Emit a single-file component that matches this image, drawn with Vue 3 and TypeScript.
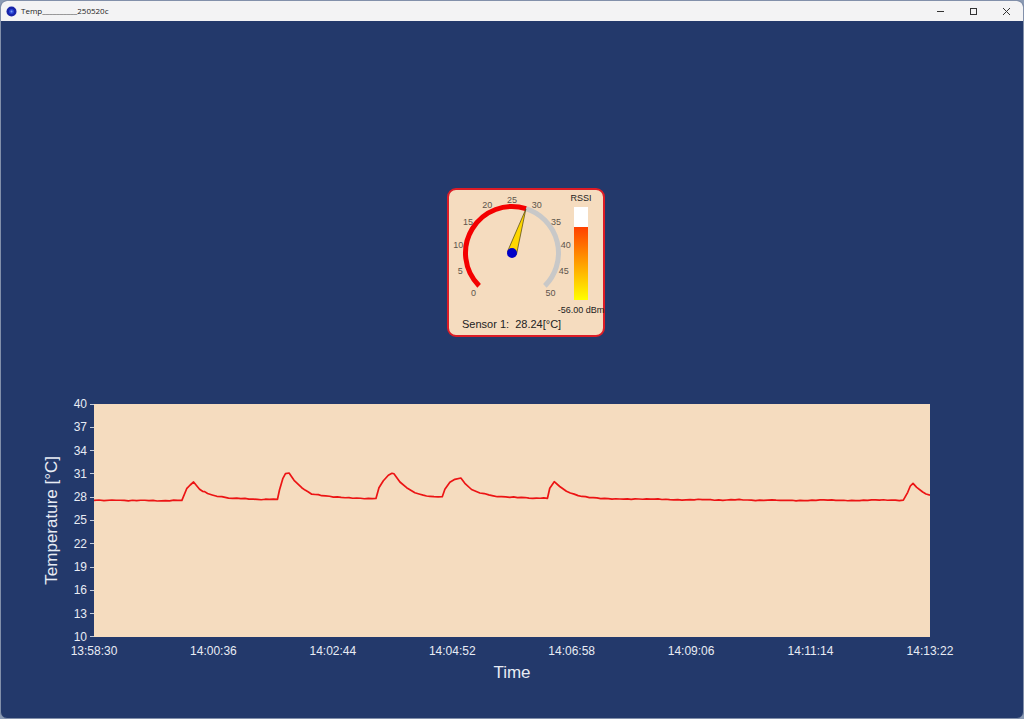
<script setup lang="ts">
type Point = [number, number]

const sensor = { name: 'Sensor 1', value: 28.24, rssi: -56 }

const gauge = { cx: 63, cy: 63, r: 46.5, max: 50, labelR: 54.5 }

function polar(value: number, radius: number): Point {
  const a = ((-135 + (value / gauge.max) * 270) * Math.PI) / 180
  return [gauge.cx + radius * Math.sin(a), gauge.cy - radius * Math.cos(a)]
}

function arc(from: number, to: number): string {
  const [x1, y1] = polar(from, gauge.r)
  const [x2, y2] = polar(to, gauge.r)
  const large = ((to - from) / gauge.max) * 270 > 180 ? 1 : 0
  return `M${x1} ${y1}A${gauge.r} ${gauge.r} 0 ${large} 1 ${x2} ${y2}`
}

const gaugeLabels = Array.from({ length: 11 }, (_, i) => {
  const [x, y] = polar(i * 5, gauge.labelR)
  return { text: String(i * 5), x, y: y + 4 }
})
const tip = polar(sensor.value, 46)
const needle = `58.5,61.5 ${tip[0]},${tip[1]} 67.5,64.5`

const rssiFill = 79

const yTicks = [40, 37, 34, 31, 28, 25, 22, 19, 16, 13, 10]
const xTicks = ['13:58:30', '14:00:36', '14:02:44', '14:04:52', '14:06:58', '14:09:06', '14:11:14', '14:13:22']

// Trace vertices in plot units (837 x 233, origin at the top left)
const trace: Point[] = [
  [0, 96.3], [5, 96], [10, 96.6], [18, 96], [55, 96.7], [88, 96.4], [93, 84.3], [96.3, 81], [99.7, 78],
  [105.7, 85.3], [108.7, 87.3], [110.8, 87.6], [113.7, 89.5], [123, 92.3], [128, 92.7], [134.7, 94.2],
  [159.3, 95.2], [183.7, 95.3], [185.7, 86], [189, 74.7], [191.7, 69.7], [195.3, 69], [200.3, 76.3], [208, 83.7],
  [218, 90.2], [228, 91.7], [239.7, 93.2], [263, 94], [282.3, 94.5], [285.3, 83.7], [289.7, 76.7], [294.7, 71.2],
  [298.3, 69.3], [300.3, 69.8], [306.3, 78], [313, 83.7], [321.3, 88.7], [326.3, 90.2], [336.3, 92.3], [348.7, 92.7],
  [351.3, 85.3], [356.3, 78.3], [361.3, 75.3], [367.3, 74], [371.3, 79.3], [378, 85.5], [386.3, 89], [399.7, 91.8],
  [416.3, 93.3], [439.3, 94.3], [454, 94.3], [456.3, 84.3], [460.8, 77.7], [466.3, 82.5], [473, 87.3], [484.7, 91.6],
  [499.7, 93.6], [526.3, 95], [576.3, 95.6], [650, 96], [687, 96.3], [810.3, 96.2], [814.7, 88.3], [817.3, 82],
  [820, 79.3], [823.7, 83.3], [829.7, 88], [833, 90], [837, 91.2],
]

// Longer stretches get intermediate samples with a small reading ripple
const samples: Point[] = trace.flatMap((p, i) => {
  const next = trace[i + 1]
  if (!next || next[0] - p[0] < 9) return [p]
  const n = Math.round((next[0] - p[0]) / 4)
  return Array.from({ length: n }, (_, k): Point => {
    const t = k / n
    const x = p[0] + (next[0] - p[0]) * t
    const ripple = k === 0 ? 0 : 0.3 * Math.sin(x * 1.7) + 0.25 * Math.sin(x * 0.61)
    return [x, p[1] + (next[1] - p[1]) * t + ripple]
  })
})
const polyline = samples.map((p) => p.join(',')).join(' ')
</script>

<template>
  <div class="window">
    <header class="titlebar">
      <svg class="app-icon" viewBox="0 0 11 11" aria-hidden="true">
        <circle cx="5.5" cy="5.5" r="5" fill="#1723a8" />
        <circle cx="5.5" cy="5.5" r="2.5" fill="#2a48d8" />
        <circle cx="5.5" cy="5.5" r="1" fill="#7fa0f4" />
      </svg>
      <h1 class="title">Temp__________250520c</h1>
      <button type="button" aria-label="Minimize">
        <svg viewBox="0 0 9 9"><path d="M1 4.5h7" /></svg>
      </button>
      <button type="button" aria-label="Maximize">
        <svg viewBox="0 0 9 9"><rect x="1.5" y="1.5" width="6" height="6" /></svg>
      </button>
      <button type="button" aria-label="Close">
        <svg viewBox="0 0 9 9"><path d="M1 1l7 7M8 1l-7 7" /></svg>
      </button>
    </header>

    <main class="content">
      <section class="card">
        <div class="meters">
          <svg class="gauge" viewBox="0 0 124 112" role="img" aria-label="Temperature gauge">
            <path :d="arc(sensor.value, 50)" class="arc rest" />
            <path :d="arc(0, sensor.value)" class="arc active" />
            <text v-for="l in gaugeLabels" :key="l.text" :x="l.x" :y="l.y">{{ l.text }}</text>
            <polygon :points="needle" class="needle" />
            <circle :cx="gauge.cx" :cy="gauge.cy" r="5" fill="#0000c8" />
          </svg>
          <div class="rssi">
            <span>RSSI</span>
            <div class="bar"><div class="fill" :style="{ height: rssiFill + '%' }"></div></div>
            <span>{{ sensor.rssi.toFixed(2) }} dBm</span>
          </div>
        </div>
        <p class="reading">{{ sensor.name }}:&nbsp; {{ sensor.value.toFixed(2) }}[°C]</p>
      </section>

      <section class="chart">
        <div class="y-title"><span>Temperature [°C]</span></div>
        <div class="y-axis">
          <span v-for="t in yTicks" :key="t">{{ t }}</span>
        </div>
        <svg class="plot" viewBox="0 0 837 233" preserveAspectRatio="none" role="img" aria-label="Temperature over time">
          <polyline :points="polyline" />
        </svg>
        <div class="x-axis">
          <span v-for="t in xTicks" :key="t">{{ t }}</span>
        </div>
        <div class="x-title">Time</div>
      </section>
    </main>
  </div>
</template>

<style>
body {
  margin: 0;
  background: #8b9bb4;
}
</style>

<style scoped>
.window {
  box-sizing: border-box;
  display: flex;
  flex-direction: column;
  min-height: 100vh;
  border: 1px solid #8290aa;
  border-radius: 7px;
  overflow: hidden;
  background: #23396b;
  font-family: "Liberation Sans", Arial, sans-serif;
}

.titlebar {
  display: flex;
  align-items: center;
  height: 20px;
  padding-left: 5px;
  background: #f3f3f4;
  color: #222;
}

.app-icon {
  width: 11px;
  height: 11px;
  margin-right: 4px;
}

.title {
  flex: 1;
  margin: 0;
  font: 400 8px/12px "Open Sans", "Noto Sans", sans-serif;
}

.titlebar button {
  display: grid;
  place-items: center;
  width: 33px;
  height: 20px;
  padding: 0;
  border: 0;
  background: none;
}

.titlebar button svg {
  width: 9px;
  height: 9px;
  fill: none;
  stroke: #333;
  stroke-width: 1;
}

.content {
  flex: 1;
  display: flex;
  flex-direction: column;
  gap: 67px;
  padding: 167px 0 35px;
}

.card {
  box-sizing: border-box;
  align-self: center;
  width: 158px;
  margin-left: 28px;
  border: 2px solid #dc1c26;
  border-radius: 9px;
  background: #f5dcbf;
}

.meters {
  display: flex;
  height: 127px;
}

.gauge {
  flex: none;
  width: 124px;
  height: 112px;
}

.gauge text {
  font-size: 9px;
  text-anchor: middle;
  fill: #5c544c;
}

.arc {
  fill: none;
  stroke-width: 5;
}

.rest {
  stroke: #c8c8c8;
}

.active {
  stroke: #f40000;
}

.needle {
  fill: #ffd700;
  stroke: #4a4010;
  stroke-width: 0.7;
}

.rssi {
  display: flex;
  flex-direction: column;
  align-items: center;
  width: 14px;
  margin-left: 1px;
  padding-top: 4px;
  font-size: 9px;
  line-height: 9px;
  white-space: nowrap;
  color: #222;
}

.bar {
  display: flex;
  align-items: flex-end;
  width: 14px;
  height: 93px;
  margin: 4px 0 6px;
  background: #fff;
}

.fill {
  width: 100%;
  background: linear-gradient(#ff4000, #ffff00);
}

.reading {
  margin: 0;
  padding: 0 0 3px 13px;
  font-size: 11px;
  line-height: 15px;
  color: #222;
}

.chart {
  flex: 1;
  display: grid;
  grid-template-columns: 20px 32px 1fr;
  grid-template-rows: minmax(160px, 1fr) auto auto;
  margin: 0 93px 0 41px;
  color: #e8ecf4;
}

.y-title {
  display: flex;
  align-items: center;
  justify-content: center;
  font-size: 17px;
  line-height: 20px;
  white-space: nowrap;
}

.y-title span {
  writing-mode: vertical-rl;
  transform: rotate(180deg);
}

.y-axis {
  display: flex;
  flex-direction: column;
  justify-content: space-between;
  margin: -7px 0;
  font-size: 12px;
  line-height: 14px;
}

.y-axis span {
  display: flex;
  align-items: center;
  justify-content: flex-end;
  gap: 3px;
}

.y-axis span::after {
  content: "";
  width: 4px;
  height: 1px;
  background: #c3cbdb;
}

.plot {
  width: 100%;
  height: 100%;
  min-height: 0;
  background: #f5dcbf;
}

.plot polyline {
  fill: none;
  stroke: #ec1414;
  stroke-width: 1.7;
  stroke-linejoin: round;
  vector-effect: non-scaling-stroke;
}

.x-axis {
  grid-column: 3;
  display: flex;
  justify-content: space-between;
  margin: 7px -30px 0;
  font-size: 12px;
  line-height: 14px;
}

.x-axis span {
  width: 60px;
  text-align: center;
}

.x-title {
  grid-column: 3;
  margin-top: 5px;
  font-size: 17px;
  line-height: 20px;
  text-align: center;
}
</style>
